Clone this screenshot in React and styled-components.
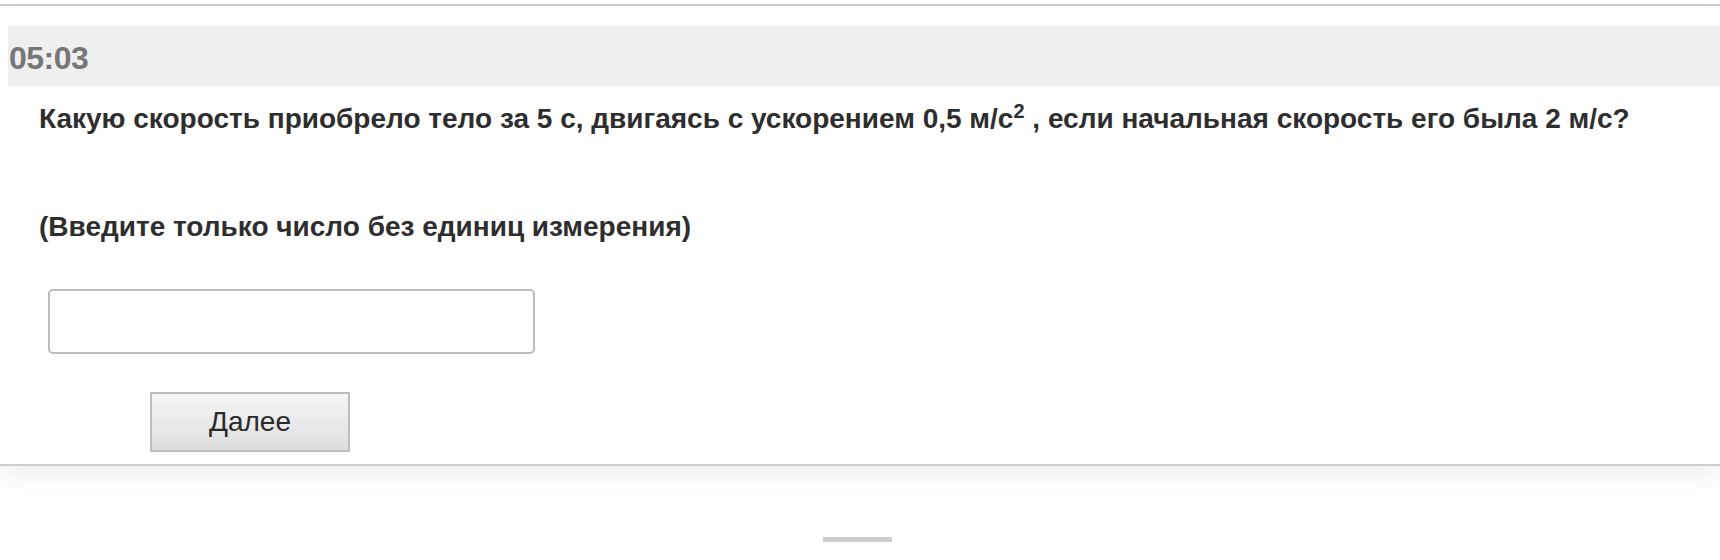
import React from "react";
import styled, { createGlobalStyle } from "styled-components";

const Global = createGlobalStyle`
  html, body { margin: 0; padding: 0; background: #fff; }
  body { font-family: "Liberation Sans", Arial, sans-serif; }
`;

const Page = styled.div`
  width: 1720px;
  height: 560px;
  padding-top: 4px;
  box-sizing: border-box;
  background: #fff;
  display: flex;
  flex-direction: column;
`;

const TopRule = styled.div`
  height: 2px;
  background: #cfcfcf;
`;

const Card = styled.div`
  background: #fff;
  padding-top: 20px;
  height: 460px;
  flex-shrink: 0;
  box-sizing: border-box;
  border-bottom: 2px solid #cdcdcd;
  box-shadow: 0 6px 24px rgba(0, 0, 0, 0.08);
  position: relative;
  z-index: 1;
`;

const TimerBar = styled.div`
  margin-left: 8px;
  height: 60px;
  background: #efefef;
  display: flex;
  align-items: center;
  padding-left: 1px;
  padding-top: 4px;
  box-sizing: border-box;
`;

const Timer = styled.span`
  font-size: 32px;
  font-weight: 700;
  color: #777;
  letter-spacing: -0.5px;
`;

const Body = styled.div`
  padding-left: 39px;
`;

const Question = styled.p`
  margin: 0;
  padding-top: 17px;
  font-size: 28px;
  font-weight: 700;
  color: #2e2e2e;
  line-height: 32px;
  sup {
    font-size: 20px;
    line-height: 0;
    vertical-align: 10px;
  }
`;

const Hint = styled.p`
  margin: 0;
  padding-top: 76px;
  font-size: 28px;
  font-weight: 700;
  color: #2e2e2e;
  line-height: 32px;
`;

const Answer = styled.input`
  display: block;
  margin: 46px 0 0 9px;
  width: 487px;
  height: 65px;
  box-sizing: border-box;
  border: 2px solid #bdbdbd;
  border-radius: 5px;
  background: #fff;
  outline: none;
  font-size: 24px;
  font-family: inherit;
  padding: 0 12px;
`;

const NextButton = styled.button`
  display: block;
  margin: 38px 0 0 111px;
  width: 200px;
  height: 60px;
  box-sizing: border-box;
  border: 2px solid #bdbdbd;
  background: linear-gradient(#f6f6f6, #dedede);
  font-family: inherit;
  font-size: 28px;
  color: #2a2a2a;
  cursor: pointer;
  padding: 0;
`;

const Footer = styled.div`
  flex: 1;
  display: flex;
  justify-content: center;
  padding-top: 71px;
  padding-right: 5px;
`;

const Handle = styled.div`
  width: 69px;
  height: 5px;
  background: #cccccc;
`;

export default function App() {
  return (
    <>
      <Global />
      <Page>
        <TopRule />
        <Card>
          <TimerBar>
            <Timer>05:03</Timer>
          </TimerBar>
          <Body>
            <Question>
              Какую скорость приобрело тело за 5 с, двигаясь с ускорением 0,5 м/с<sup>2</sup> , если начальная скорость его была 2 м/с?
            </Question>
            <Hint>(Введите только число без единиц измерения)</Hint>
            <Answer type="text" aria-label="Ответ" />
            <NextButton type="button">Далее</NextButton>
          </Body>
        </Card>
        <Footer>
          <Handle />
        </Footer>
      </Page>
    </>
  );
}
